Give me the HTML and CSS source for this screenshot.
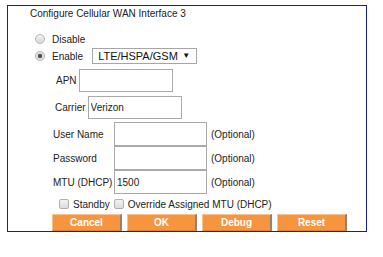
FILE: index.html
```html
<!DOCTYPE html>
<html lang="en">

<head>
    <meta charset="UTF-8">
    <title>Configure Cellular WAN Interface 3</title>
    <link rel="stylesheet" href="styles.css">
</head>

<body>
    <form class="panel" id="wanForm">
        <div class="title">Configure Cellular WAN Interface 3</div>

        <label class="radio-row first">
            <input type="radio" name="mode" value="disable">
            <span>Disable</span>
        </label>
        <div class="radio-row">
            <label class="radio-label">
                <input type="radio" name="mode" value="enable" checked>
                <span>Enable</span>
            </label>
            <span class="select-wrap">
                <select name="network">
                    <option>LTE/HSPA/GSM</option>
                </select>
            </span>
        </div>

        <div class="field apn">
            <label for="apn">APN</label>
            <input type="text" id="apn" name="apn">
        </div>
        <div class="field carrier">
            <label for="carrier">Carrier</label>
            <input type="text" id="carrier" name="carrier" value="Verizon">
        </div>

        <div class="grid">
            <label for="user">User Name</label>
            <input type="text" id="user" name="user">
            <span class="hint">(Optional)</span>

            <label for="pass">Password</label>
            <input type="password" id="pass" name="pass">
            <span class="hint">(Optional)</span>

            <label for="mtu">MTU (DHCP)</label>
            <input type="text" id="mtu" name="mtu" value="1500">
            <span class="hint">(Optional)</span>
        </div>

        <div class="checks">
            <label><input type="checkbox" name="standby"> Standby</label>
            <label><input type="checkbox" name="override"> Override Assigned MTU (DHCP)</label>
        </div>

        <div class="buttons">
            <button type="button">Cancel</button>
            <button type="submit">OK</button>
            <button type="button">Debug</button>
            <button type="reset">Reset</button>
        </div>
    </form>
</body>

</html>
```

FILE: styles.css
```css
/* Cellular WAN form */
body {
    margin: 0;
    padding: 5px 0 0 7px;
    background-color: #fff;
    font-family: "Liberation Sans", Arial, sans-serif;
    font-size: 10px;
    color: #222;
}

.panel {
    box-sizing: border-box;
    width: 360px;
    height: 227px;
    border: 1px solid #1c1ca0;
    margin: 0;
}

.title {
    margin: 2px 0 0 22px;
    height: 12px;
    line-height: 12px;
}

.radio-row {
    display: flex;
    align-items: center;
    margin-left: 27px;
    height: 16px;
}

.radio-row.first {
    margin-top: 13px;
    height: 12px;
    margin-bottom: 3px;
}

.radio-label {
    display: flex;
    align-items: center;
}

input[type="radio"] {
    appearance: none;
    box-sizing: border-box;
    width: 10px;
    height: 10px;
    margin: 0 7px 0 0;
    border: 1px solid #b4b4b4;
    border-radius: 50%;
    background: linear-gradient(#f0f0f0, #d8d8d8);
}

input[type="radio"]:checked {
    background: radial-gradient(circle, #555 0 2px, #e2e2e2 2.5px);
}

.select-wrap {
    position: relative;
    margin-left: 9px;
}

.select-wrap::after {
    content: "\25BC";
    position: absolute;
    right: 7px;
    top: 3px;
    font-size: 8px;
    color: #111;
    pointer-events: none;
}

select {
    appearance: none;
    box-sizing: border-box;
    width: 105px;
    height: 16px;
    padding: 0 0 0 5px;
    border: 1px solid #a6a6a6;
    border-radius: 0;
    background: #fff;
    font-family: inherit;
    font-size: 11px;
    color: #111;
}

.field {
    display: flex;
    align-items: center;
}

input[type="text"],
input[type="password"] {
    box-sizing: border-box;
    width: 94px;
    height: 23px;
    margin: 0;
    padding: 0 2px;
    border: 1px solid #a9a9a9;
    font-family: inherit;
    font-size: 10px;
    color: #222;
}

.apn {
    margin: 5px 0 0 48px;
}

.apn label {
    margin-right: 2px;
}

.carrier {
    margin: 4px 0 0 47px;
}

.carrier label {
    margin-right: 2px;
}

.grid {
    display: grid;
    grid-template-columns: 57px 93px auto;
    grid-auto-rows: 24px;
    align-items: center;
    column-gap: 4px;
    margin: 3px 0 0 45px;
}

.grid label {
    white-space: nowrap;
}

.grid input[type="text"],
.grid input[type="password"] {
    width: 93px;
    height: 24px;
}

.checks {
    display: flex;
    align-items: center;
    gap: 4px;
    height: 14px;
    margin: 3px 0 0 51px;
}

.checks label {
    display: flex;
    align-items: center;
}

input[type="checkbox"] {
    appearance: none;
    box-sizing: border-box;
    width: 10px;
    height: 10px;
    margin: 0 4px 0 0;
    border: 1px solid #b0b0b0;
    border-radius: 2px;
    background: linear-gradient(#f2f2f2, #dcdcdc);
}

.buttons {
    display: flex;
    gap: 5px;
    margin: 3px 0 0 44px;
}

button {
    box-sizing: border-box;
    width: 70px;
    height: 17px;
    padding: 0;
    background-color: #f7953e;
    color: white;
    font-family: inherit;
    font-size: 10px;
    font-weight: bold;
    border-top: 1px solid #fbc390;
    border-left: 1px solid #fbc390;
    border-right: 2px solid #8f8173;
    border-bottom: 1px solid #d9823a;
    cursor: pointer;
}

button:hover {
    background-color: #f08a30;
}
```
